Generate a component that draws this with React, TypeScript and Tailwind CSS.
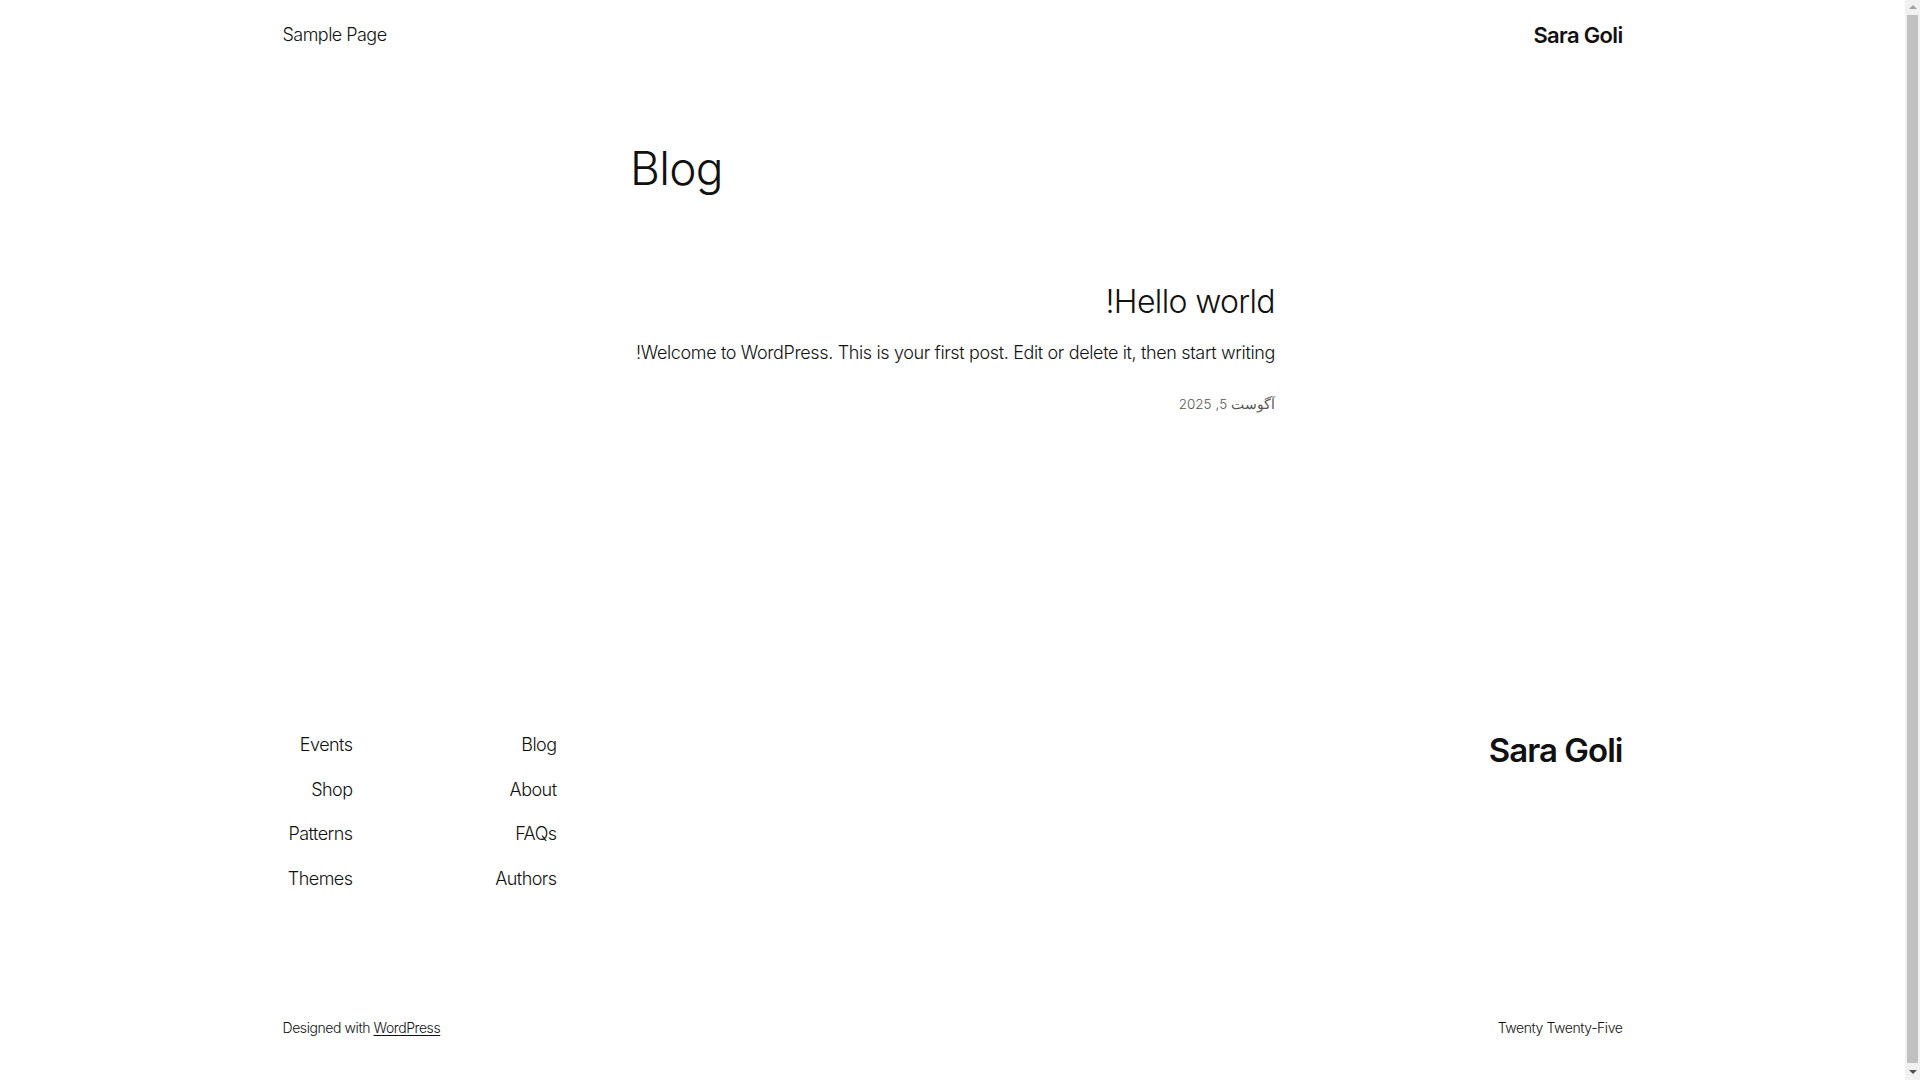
import React from 'react'

const leftLinks = ['Events', 'Shop', 'Patterns', 'Themes']
const rightLinks = ['Blog', 'About', 'FAQs', 'Authors']

const Header: React.FC = () => (
  <header className="mx-auto flex w-[1340px] items-center justify-between pt-[23px] pb-[21px]">
    <a href="#" className="text-[18px] font-light leading-[24px] tracking-[-0.03em] text-[#111111]">
      Sample Page
    </a>
    <a href="#" className="text-[22px] font-semibold leading-[24px] tracking-[-0.03em] text-[#111111]">
      Sara Goli
    </a>
  </header>
)

const Post: React.FC = () => (
  <article dir="rtl" className="mt-[87px] text-right">
    <h2 className="text-[32px] font-light leading-[38px] tracking-[-0.02em] text-[#111111]">Hello world!</h2>
    <p className="mt-[17px] whitespace-nowrap text-[18px] font-light leading-[29px] tracking-[-0.02em] text-[#111111]">
      Welcome to WordPress. This is your first post. Edit or delete it, then start writing!
    </p>
    <div className="mt-[26px] text-[13.5px] font-light leading-[22px] tracking-[-0.045em] text-[#555555]">آگوست 5, 2025</div>
  </article>
)

const Footer: React.FC = () => (
  <footer className="mx-auto mt-[316px] w-[1340px] pb-[55px]">
    <div className="flex items-start justify-between">
      <nav className="flex">
        <ul className="flex w-[70px] flex-col items-end gap-[17.5px]">
          {leftLinks.map((l) => (
            <li key={l} className="whitespace-nowrap text-[18px] font-light leading-[27px] tracking-[-0.03em] text-[#111111]">
              {l}
            </li>
          ))}
        </ul>
        <ul className="flex w-[204px] flex-col items-end gap-[17.5px]">
          {rightLinks.map((l) => (
            <li key={l} className="whitespace-nowrap text-[18px] font-light leading-[27px] tracking-[-0.03em] text-[#111111]">
              {l}
            </li>
          ))}
        </ul>
      </nav>
      <a href="#" className="mt-[-1px] text-[33px] font-semibold leading-[40px] tracking-[-0.03em] text-[#111111]">
        Sara Goli
      </a>
    </div>
    <div className="mt-[125px] flex items-center justify-between text-[14px] font-light leading-[22px] tracking-[-0.03em] text-[#111111]">
      <p>
        Designed with{' '}
        <a href="#" className="underline underline-offset-2">
          WordPress
        </a>
      </p>
      <p>Twenty Twenty-Five</p>
    </div>
  </footer>
)

// browser scrollbar as seen in the screenshot
const Scrollbar: React.FC = () => (
  <div className="flex h-[1080px] w-[15px] shrink-0 flex-col items-center bg-[#f1f1f1]">
    <div className="mt-[5px] h-0 w-0 border-x-[4px] border-b-[4px] border-x-transparent border-b-[#a3a3a3]" />
    <div className="mt-[6px] w-[11px] flex-1 bg-[#c1c1c1]" />
    <div className="mt-[7px] mb-[6px] h-0 w-0 border-x-[4px] border-t-[4px] border-x-transparent border-t-[#505050]" />
  </div>
)

export default function App() {
  return (
    <div className="flex h-[1080px] w-[1920px] overflow-hidden bg-white font-['Inter',sans-serif] text-[#111111]">
      <div className="w-[1905px] shrink-0">
        <Header />
        <main className="mx-auto w-[645px]">
          <h1 className="mt-[73px] text-[46px] font-light leading-[55px] tracking-[-0.015em] text-[#111111]">Blog</h1>
          <Post />
        </main>
        <Footer />
      </div>
      <Scrollbar />
    </div>
  )
}
